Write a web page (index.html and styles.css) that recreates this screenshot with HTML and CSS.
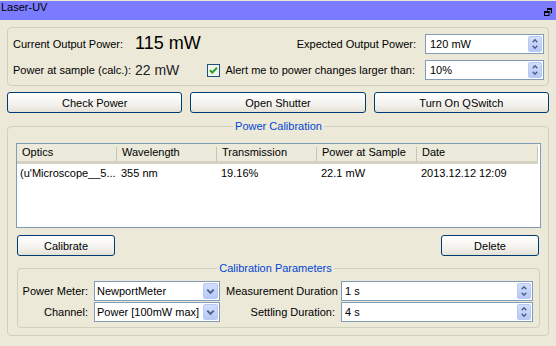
FILE: index.html
```html
<!DOCTYPE html>
<html lang="en">
<head>
  <meta charset="UTF-8">
  <title>Laser-UV</title>
  <link rel="stylesheet" href="styles.css">
</head>
<body>
  <div class="titlebar">
    <span>Laser-UV</span>
    <svg class="restore" width="8" height="8" viewBox="0 0 8 8">
      <path d="M3 0.5h4.5v4.5h-1M3.5 0.5v2" fill="none" stroke="#000" stroke-width="1"/>
      <rect x="3" y="0" width="5" height="2" fill="#000"/>
      <rect x="0.5" y="3.5" width="4.5" height="4" fill="none" stroke="#000"/>
      <rect x="0" y="3" width="5.5" height="2" fill="#000"/>
    </svg>
  </div>

  <div class="main">
    <div class="status">
      <span>Current Output Power:</span>
      <span class="big">115 mW</span>
      <span class="right">Expected Output Power:</span>
      <div class="spin"><span>120 mW</span><i class="spin-btn"><svg width="13" height="14" viewBox="0 0 13 14"><path d="M4 5l2.5-2.5L9 5M4 9l2.5 2.5L9 9" fill="none" stroke="#4d6185" stroke-width="1.6"/></svg></i></div>

      <span>Power at sample (calc.):</span>
      <span class="mid">22 mW</span>
      <label class="check">
        <svg width="13" height="13" viewBox="0 0 13 13">
          <rect x="0.5" y="0.5" width="12" height="12" fill="#f4f4ef" stroke="#1c5180"/>
          <path d="M3 6.2l2.3 2.4 4.6-4.8" fill="none" stroke="#21a121" stroke-width="2"/>
        </svg>
        Alert me to power changes larger than:
      </label>
      <div class="spin"><span>10%</span><i class="spin-btn"><svg width="13" height="14" viewBox="0 0 13 14"><path d="M4 5l2.5-2.5L9 5M4 9l2.5 2.5L9 9" fill="none" stroke="#4d6185" stroke-width="1.6"/></svg></i></div>
    </div>

    <div class="actions">
      <button>Check Power</button>
      <button>Open Shutter</button>
      <button>Turn On QSwitch</button>
    </div>

    <fieldset class="calibration">
      <legend>Power Calibration</legend>
      <div class="table-wrap">
        <table>
          <thead>
            <tr>
              <th class="c1">Optics</th>
              <th>Wavelength</th>
              <th>Transmission</th>
              <th>Power at Sample</th>
              <th class="c5">Date</th>
            </tr>
          </thead>
          <tbody>
            <tr>
              <td>(u'Microscope__5...</td>
              <td>355 nm</td>
              <td>19.16%</td>
              <td>22.1 mW</td>
              <td>2013.12.12 12:09</td>
            </tr>
          </tbody>
        </table>
      </div>

      <div class="cal-actions">
        <button>Calibrate</button>
        <button>Delete</button>
      </div>

      <fieldset class="params">
        <legend>Calibration Parameters</legend>
        <div class="params-grid">
          <span class="lbl">Power Meter:</span>
          <div class="combo"><span>NewportMeter</span><i class="combo-btn"><svg width="14" height="16" viewBox="0 0 14 16"><path d="M3.5 6.5l3.5 3.5 3.5-3.5" fill="none" stroke="#4d6185" stroke-width="2"/></svg></i></div>
          <span class="lbl">Measurement Duration</span>
          <div class="spin"><span>1 s</span><i class="spin-btn"><svg width="13" height="14" viewBox="0 0 13 14"><path d="M4 5l2.5-2.5L9 5M4 9l2.5 2.5L9 9" fill="none" stroke="#4d6185" stroke-width="1.6"/></svg></i></div>

          <span class="lbl">Channel:</span>
          <div class="combo"><span>Power [100mW max]</span><i class="combo-btn"><svg width="14" height="16" viewBox="0 0 14 16"><path d="M3.5 6.5l3.5 3.5 3.5-3.5" fill="none" stroke="#4d6185" stroke-width="2"/></svg></i></div>
          <span class="lbl">Settling Duration:</span>
          <div class="spin"><span>4 s</span><i class="spin-btn"><svg width="13" height="14" viewBox="0 0 13 14"><path d="M4 5l2.5-2.5L9 5M4 9l2.5 2.5L9 9" fill="none" stroke="#4d6185" stroke-width="1.6"/></svg></i></div>
        </div>
      </fieldset>
    </fieldset>
  </div>
</body>
</html>
```

FILE: styles.css
```css
body {
  margin: 0;
  background: #ece9d8;
  font-family: "Liberation Sans", Arial, sans-serif;
  font-size: 11px;
  color: #000;
}
.titlebar {
  margin-top: 1px;
  height: 19px;
  background: #7b7bff;
  display: flex;
  justify-content: space-between;
  align-items: flex-start;
  padding: 0 4px 0 1px;
  line-height: 13px;
}
.restore {
  margin-top: 7px;
}
.main {
  padding: 0 7px;
}
.status {
  margin-top: 7px;
  border: 1px solid #d0d0bf;
  border-radius: 4px;
  padding: 5px 4px 5px 5px;
  display: grid;
  grid-template-columns: 122px 1fr auto 119px;
  row-gap: 6px;
  align-items: center;
}
.big {
  font-size: 18px;
}
.mid {
  font-size: 14px;
  color: #222;
}
.right {
  text-align: right;
  padding-right: 9px;
}
.check {
  display: flex;
  align-items: center;
  gap: 5px;
  padding-right: 10px;
}
.spin, .combo {
  display: flex;
  align-items: center;
  justify-content: space-between;
  height: 20px;
  box-sizing: border-box;
  border: 1px solid #7f9db9;
  background: #fff;
  padding: 1px 1px 1px 4px;
}
.spin-btn, .combo-btn {
  display: flex;
  align-items: center;
  justify-content: center;
  width: 15px;
  height: 16px;
  box-sizing: border-box;
  border: 1px solid #b7c8f3;
  border-radius: 2px;
  background: linear-gradient(#d3defc, #b6c9f7);
}
.spin-btn {
  width: 14px;
}
.actions {
  margin-top: 6px;
  display: grid;
  grid-template-columns: repeat(3, 1fr);
  gap: 8px;
}
button {
  height: 21px;
  border: 1px solid #003c74;
  border-radius: 3px;
  background: linear-gradient(#ffffff, #f3f2ed 60%, #e4e1d6);
  font-family: inherit;
  font-size: 11px;
  font-weight: normal;
  color: #000;
  padding: 0;
}
fieldset {
  border: 1px solid #d0d0bf;
  border-radius: 4px;
  margin: 0;
}
legend {
  margin: 0 auto;
  padding: 0 2px;
  color: #0046d5;
  line-height: 13px;
}
.calibration {
  margin-top: 7px;
  padding: 10px 7px 7px 8px;
}
.table-wrap {
  height: 85px;
  box-sizing: border-box;
  border: 1px solid #7f9db9;
  background: #fff;
}
table {
  border-collapse: collapse;
  table-layout: fixed;
  width: 521px;
}
th {
  position: relative;
  height: 18px;
  padding: 0 5px;
  text-align: left;
  font-weight: normal;
  background: #ebeadb;
  border-bottom: 3px solid #d6d2c2;
  width: 100px;
  box-sizing: border-box;
}
th::after {
  content: "";
  position: absolute;
  right: 0;
  top: 3px;
  height: 14px;
  width: 1px;
  background: #c7c5b2;
  box-shadow: 1px 0 0 #fff;
}
th.c5 {
  width: 121px;
}
td {
  height: 18px;
  padding: 0 5px 0 4px;
  white-space: nowrap;
  overflow: hidden;
}
td:first-child {
  padding-left: 3px;
}
.cal-actions {
  margin-top: 7px;
  display: flex;
  justify-content: space-between;
  padding: 0 2px 0 1px;
}
.cal-actions button {
  width: 98px;
}
.params {
  margin: 6px 1px 0 1px;
  padding: 6px 6px 5px 0;
}
.params-grid {
  display: grid;
  grid-template-columns: 70px 126px 109px 1fr;
  column-gap: 6px;
  row-gap: 1px;
  align-items: center;
}
.lbl {
  text-align: right;
  white-space: nowrap;
}
.combo {
  padding-left: 2px;
}
.params .spin {
  padding-left: 3px;
}
```
